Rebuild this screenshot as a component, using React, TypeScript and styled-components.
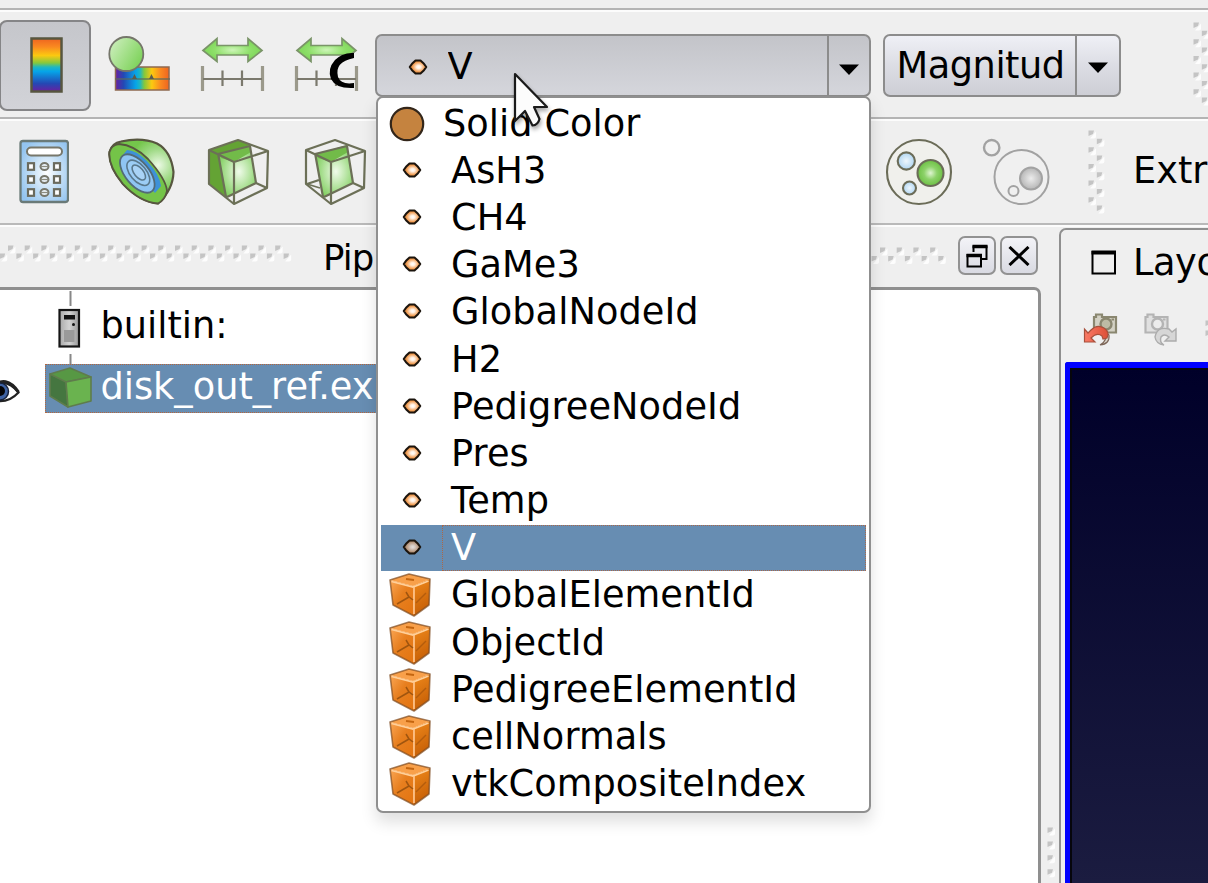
import React from "react";
import styled, { createGlobalStyle } from "styled-components";

const GlobalStyle = createGlobalStyle`
  html, body { margin: 0; padding: 0; overflow: hidden; }
  * { box-sizing: border-box; }
`;

const EDGE = "#8f8f8f";

const Window = styled.div`
  position: relative;
  width: 1208px;
  height: 883px;
  overflow: hidden;
  display: flex;
  flex-direction: column;
  background: #efefef;
  color: #000;
  font-family: "DejaVu Sans", sans-serif;
  font-size: 36.7px;
  white-space: nowrap;
`;

const Separator = styled.div<{ $soft?: boolean }>`
  flex: none;
  height: 4px;
  background: linear-gradient(${(p) => (p.$soft ? "#b9b9b9" : "#b4b4b4")} 0 2px, #fcfcfc 2px 4px);
`;

const TopStrip = styled.div`
  flex: none;
  height: 8px;
  background: #efefef;
`;

const Toolbar = styled.div<{ $height: number }>`
  flex: none;
  display: flex;
  align-items: flex-start;
  height: ${(p) => p.$height}px;
  overflow: hidden;
`;

const ToggleButton = styled.div`
  flex: none;
  display: flex;
  align-items: center;
  justify-content: center;
  width: 92px;
  height: 91px;
  margin: 8px 0 0 -1px;
  padding-left: 3px;
  padding-bottom: 1px;
  border: 2.5px solid #858587;
  border-radius: 8px;
  background: linear-gradient(#c5c6cb, #d2d3d8);
`;

const Icon = styled.svg<{ $left?: number; $top?: number }>`
  flex: none;
  display: block;
  margin-left: ${(p) => p.$left ?? 0}px;
  margin-top: ${(p) => p.$top ?? 0}px;
`;

const Combo = styled.div<{ $width: number; $left: number; $pressed?: boolean }>`
  flex: none;
  display: flex;
  width: ${(p) => p.$width}px;
  height: 63px;
  margin: 22px 0 0 ${(p) => p.$left}px;
  border: 2px solid #8c8c8c;
  border-radius: 7px;
  background: ${(p) =>
    p.$pressed ? "linear-gradient(#c3c4c9, #d5d6dc)" : "linear-gradient(#eff0f6, #dcdde4 50%, #cdced5)"};
`;

const ComboValue = styled.div<{ $left: number; $shift?: number }>`
  flex: 1;
  min-width: 0;
  display: flex;
  align-items: center;
  padding-left: ${(p) => p.$left}px;
  padding-top: ${(p) => p.$shift ?? 0}px;
  line-height: 56px;
  overflow: hidden;
`;

const ComboText = styled.span<{ $left?: number }>`
  flex: 1;
  min-width: 0;
  margin-left: ${(p) => p.$left ?? 0}px;
  margin-right: 12px;
  letter-spacing: -0.45px;
  overflow: hidden;
`;

const ComboArrow = styled.div<{ $width: number; $shift?: number }>`
  flex: none;
  display: flex;
  align-items: center;
  justify-content: center;
  width: ${(p) => p.$width}px;
  padding-top: ${(p) => p.$shift ?? 0}px;
  border-left: 2px solid #8c8c8c;
`;

const ToolbarLabel = styled.span`
  margin-left: 25px;
  margin-top: 18px;
  line-height: 64px;
`;

const Workspace = styled.div`
  flex: 1;
  min-height: 0;
  display: flex;
`;

const Dock = styled.div`
  flex: none;
  width: 1041px;
  display: flex;
  flex-direction: column;
`;

const DockHeader = styled.div`
  flex: none;
  height: 60px;
  display: flex;
  align-items: flex-start;
`;

const DockTitle = styled.span`
  width: 546px;
  margin-left: 30px;
  line-height: 58px;
  padding-top: 2px;
  font-size: 35.5px;
  letter-spacing: -0.9px;
`;

const DockButton = styled.div<{ $left: number }>`
  flex: none;
  display: flex;
  align-items: center;
  justify-content: center;
  width: 38px;
  height: 39px;
  margin: 9px 0 0 ${(p) => p.$left}px;
  border: 2px solid #929292;
  border-radius: 7px;
  background: linear-gradient(#f3f3f7, #d9dae2);
`;

const Tree = styled.div`
  flex: 1;
  display: flex;
  flex-direction: column;
  background: #fff;
  border-top: 3px solid ${EDGE};
  border-right: 3px solid ${EDGE};
  border-top-right-radius: 7px;
`;

const TreeRow = styled.div<{ $height: number }>`
  display: flex;
  height: ${(p) => p.$height}px;
`;

const TreeLabel = styled.span<{ $left: number; $line: number }>`
  margin-left: ${(p) => p.$left}px;
  line-height: ${(p) => p.$line}px;
`;

const Selection = styled.div`
  display: flex;
  width: 500px;
  height: 49px;
  margin-left: 25px;
  color: #fff;
  background: #678db2;
  border: 1px dotted #b5663c;
`;

const Splitter = styled.div`
  flex: none;
  display: flex;
  width: 18px;
`;

const ViewPane = styled.div`
  flex: 1;
  min-width: 0;
  display: flex;
  flex-direction: column;
  margin-top: 1px;
  border-top: 2.5px solid ${EDGE};
  border-left: 2.5px solid ${EDGE};
  border-top-left-radius: 7px;
  overflow: hidden;
`;

const TabBar = styled.div`
  flex: none;
  display: flex;
  height: 78px;
  line-height: 64px;
`;

const TabLabel = styled.span`
  margin-left: 16px;
  margin-top: 1px;
  letter-spacing: -0.4px;
`;

const ViewTools = styled.div`
  flex: none;
  display: flex;
  height: 54px;
`;

const RenderView = styled.div`
  flex: 1;
  margin-left: 4px;
  border-top: 6px solid #0000fe;
  border-left: 5px solid #0000fe;
  border-top-left-radius: 3px;
  background: linear-gradient(#000029, #1b1c40);
  box-shadow: inset 2px 2px 0 #06060c;
`;

const Popup = styled.div`
  position: absolute;
  left: 376px;
  top: 96px;
  width: 495px;
  height: 717px;
  padding: 2px 3px;
  border: 2.5px solid ${EDGE};
  border-radius: 7px;
  background: #fff;
  box-shadow: 0 9px 16px rgba(0, 0, 0, 0.13);
`;

const Option = styled.div<{ $selected?: boolean }>`
  display: flex;
  align-items: center;
  height: 47.2px;
  color: ${(p) => (p.$selected ? "#fff" : "#000")};
  background: ${(p) => (p.$selected ? "linear-gradient(#678db2 0 46.2px, transparent 46.2px)" : "none")};
`;

const OptionIcon = styled.span`
  flex: none;
  display: flex;
  justify-content: center;
  width: 61px;
`;

const OptionText = styled.span<{ $selected?: boolean; $near?: boolean }>`
  flex: 1;
  height: 46px;
  line-height: 44px;
  padding-left: ${(p) => (p.$near ? 0 : 8)}px;
  letter-spacing: 0.06px;
  border: 1px dotted ${(p) => (p.$selected ? "#a9684a" : "transparent")};
`;

const Pointer = styled.svg`
  position: absolute;
  left: 508px;
  top: 66px;
  filter: drop-shadow(1px 3px 2px rgba(0, 0, 0, 0.35));
`;

const INK = "#57563f";

function Grip({ dots, width, height, left, top }: { dots: number[][]; width: number; height: number; left?: number; top?: number }) {
  return (
    <Icon width={width} height={height} $left={left} $top={top}>
      {dots.map(([x, y], i) => (
        <g key={i}>
          <path d={`M${x + 8} ${y + 1.5}v5q0 2-2 2h-4z`} fill="#fdfdfd" />
          <path d={`M${x + 0.5} ${y + 0.5}h5.500l-1 3.500l-4.500 2z`} fill="#c4c4c4" />
        </g>
      ))}
    </Icon>
  );
}

const P = 16.7;
const range = (n: number) => Array.from({ length: n }, (_, i) => i);
const leftGrip = [
  ...range(17).map((i) => [7.5 + i * P, 1]),
  ...range(18).map((i) => [-0.8 + i * P, 9]),
];
const rightGrip = [
  ...range(4).map((i) => [8.5 + i * P, 0]),
  ...range(5).map((i) => [0 + i * P, 8.5]),
];
const verticalGrip = [
  ...range(5).map((i) => [0, i * P]),
  ...range(5).map((i) => [8.3, 8.3 + i * P]),
];

function Rainbow({ id, vertical }: { id: string; vertical?: boolean }) {
  return (
    <linearGradient id={id} x1="0" y1={vertical ? "1" : "0"} x2={vertical ? "0" : "1"} y2="0">
      <stop offset="0" stopColor="#6a1fa0" />
      <stop offset=".15" stopColor="#2448b4" />
      <stop offset=".38" stopColor="#06a5e8" />
      <stop offset=".46" stopColor="#1fb7c0" />
      <stop offset=".54" stopColor="#86c83c" />
      <stop offset=".68" stopColor="#fcc910" />
      <stop offset=".84" stopColor="#fa8a20" />
      <stop offset="1" stopColor="#ee6420" />
    </linearGradient>
  );
}

function ColorMapIcon() {
  return (
    <svg width="33" height="56">
      <defs><Rainbow id="mapV" vertical /></defs>
      <rect x="1.500" y="1.500" width="30" height="53" fill="url(#mapV)" stroke={INK} strokeWidth="2.500" />
    </svg>
  );
}

function EditMapIcon() {
  return (
    <Icon width="64" height="58" viewBox="108 35 64 58" $left={17} $top={23}>
      <defs>
        <Rainbow id="mapH" />
        <linearGradient id="ball" x1="0" y1="0" x2="1" y2="0.6">
          <stop offset="0" stopColor="#d4f1c6" />
          <stop offset="1" stopColor="#7fd35c" />
        </linearGradient>
      </defs>
      <rect x="115.500" y="67" width="53.500" height="23" fill="url(#mapH)" stroke="#8f6a50" strokeWidth="1.500" />
      <path d="M115 79h55" stroke="#5c6a5c" strokeOpacity=".85" strokeWidth="1.600" />
      <path d="M132 79l2.500-5l2.500 5zM149 79l2.500-5l2.500 5z" fill="#5c5c4c" />
      <circle cx="126.300" cy="54" r="17" fill="url(#ball)" stroke="#75766a" strokeWidth="1.800" />
    </Icon>
  );
}

function RescaleIcon({ left, id, custom }: { left: number; id: string; custom?: boolean }) {
  return (
    <Icon width="66" height="58" viewBox="200 35 66 58" $left={left} $top={23}>
      <defs>
        <radialGradient id={id}>
          <stop offset="0" stopColor="#cdf5b8" />
          <stop offset=".6" stopColor="#8fe06b" />
          <stop offset="1" stopColor="#7ed659" />
        </radialGradient>
      </defs>
      <path d="M204 50.500L218 38.500v7h31V38.500l14 12L249 61.500v-6.500h-31V61.500z" fill={`url(#${id})`} stroke="#7a9468" strokeWidth="1.700" />
      <path d="M203.500 66v25M263.500 66v25" stroke="#9b998b" strokeWidth="3.200" />
      <path d="M204 79h59M223.500 70.500V86M243 70.500V86" stroke="#7b796d" strokeWidth="2.200" />
      {custom && (
        <path d="M261 53q-11-1-19 7q-8 9-4 19q5 10 23 9v-5q-13 2-16-6q-4-15 16-19z" fill="#000" />
      )}
    </Icon>
  );
}

function CalculatorIcon() {
  return (
    <Icon width="50" height="65" viewBox="19 139 50 65" $left={19} $top={18}>
      <defs>
        <radialGradient id="calc" cx=".55" cy=".52" r=".62">
          <stop offset="0" stopColor="#fff" />
          <stop offset=".5" stopColor="#c4dff5" />
          <stop offset="1" stopColor="#93c4f0" />
        </radialGradient>
      </defs>
      <rect x="20.500" y="141" width="47.500" height="61" rx="2.500" fill="url(#calc)" stroke="#6a7a78" strokeWidth="2.300" />
      <rect x="27" y="147.500" width="35" height="8" rx="4" fill="#fff" stroke="#77776b" strokeWidth="2" />
      {[166.5, 179.5, 192.5].map((y) =>
        [31, 44.5, 57].map((x, i) =>
          i === 1 ? (
            <g key={x + "" + y}>
              <ellipse cx={x} cy={y} rx="4" ry="3.500" fill="#e9f1f5" stroke="#77776b" strokeWidth="2" />
              <path d={`M${x - 4} ${y}h8`} stroke="#8c8c80" strokeWidth="1.200" />
            </g>
          ) : (
            <rect key={x + "" + y} x={x - 3} y={y - 3.3} width="6" height="6.600" fill="#fff" stroke="#6a6a5d" strokeWidth="2.200" />
          )
        )
      )}
    </Icon>
  );
}

function ContourIcon() {
  return (
    <Icon width="67" height="67" viewBox="108 138 67 67" $left={39} $top={17}>
      <defs>
        <radialGradient id="shell" cx=".76" cy=".4" r=".45">
          <stop offset="0" stopColor="#edfae6" />
          <stop offset=".55" stopColor="#a0da87" />
          <stop offset="1" stopColor="#74c64b" />
        </radialGradient>
      </defs>
      <path d="M109.500 152Q112 143 121 141.500Q142 137 157 143.500Q171 151 173.500 172Q173 190 158 203.500Q140 202 123 184Q108 166 109.500 152z" fill="url(#shell)" stroke={INK} strokeWidth="2.200" />
      <path d="M109.500 152Q111 145 119 144Q134 145 148 159Q166 179 167 191Q165 200 158 203.500Q140 202 123 184Q108 166 109.500 152z" fill="#74c448" stroke={INK} strokeWidth="1.800" />
      <path d="M127 150Q136 150 147 161Q160 175 161 186L155 193L122 156z" fill="#3e91d8" />
      <ellipse cx="137.300" cy="173.500" rx="11.800" ry="23" transform="rotate(-40 137.300 173.500)" fill="#8fc5f3" stroke="#536b78" strokeWidth="1.800" />
      <ellipse cx="138.300" cy="172.800" rx="8" ry="15" transform="rotate(-40 138.300 172.800)" fill="#9ccdf5" stroke="#59788c" strokeWidth="1.600" />
      <ellipse cx="138.800" cy="172.500" rx="4.500" ry="9" transform="rotate(-40 138.800 172.500)" fill="#a9d3f6" stroke="#59788c" strokeWidth="1.600" />
    </Icon>
  );
}

function ClipIcon({ left, slice }: { left: number; slice?: boolean }) {
  const id = slice ? "sliceFace" : "clipFace";
  return (
    <Icon width="64" height="67" viewBox="207 138 64 67" $left={left} $top={17}>
      <defs>
        <radialGradient id={id} cx=".55" cy=".5" r=".6">
          <stop offset="0" stopColor="#f0fbea" />
          <stop offset="1" stopColor="#79cc56" />
        </radialGradient>
      </defs>
      {!slice && <path d="M209 150L238 140L251 145L220 158L226 197L209 184z" fill="#64a334" />}
      <path d="M218 154L250 146L256 183L226 197z" fill={`url(#${id})`} />
      <path d="M219 154L250 145L251 152L234 162L221 158z" fill="#72bb49" />
      <g fill="none" stroke="#6c7057" strokeWidth="2.200" strokeLinejoin="round">
        <path d="M209 150L238 140L268 151L267 188L234 204L209 184z" />
        <path d="M209 150L234 162L268 151M234 162V204M218 153L226 197M218 154L250 146L256 183L227 197" />
        <path d="M256 183L267 188" />
        {slice && <path d="M210 184L222 180" />}
        {slice && <path d="M210 184L223 188" strokeWidth="1.500" />}
      </g>
    </Icon>
  );
}

function GroupIcon() {
  return (
    <Icon width="68" height="68" viewBox="885 138 68 68" $left={517} $top={17}>
      <defs>
        <radialGradient id="greenBall"><stop offset="0" stopColor="#dff5d1" /><stop offset=".5" stopColor="#8dd26a" /><stop offset="1" stopColor="#6cc043" /></radialGradient>
        <radialGradient id="blueBall"><stop offset="0" stopColor="#eef7fd" /><stop offset="1" stopColor="#b0d6f2" /></radialGradient>
      </defs>
      <g stroke="#6b6c58" strokeWidth="2.100">
        <circle cx="919" cy="172" r="32" fill="#f0f0ec" />
        <circle cx="906.300" cy="161" r="8.600" fill="url(#blueBall)" />
        <circle cx="909.500" cy="188" r="6.500" fill="url(#blueBall)" />
        <circle cx="930.500" cy="173" r="13" fill="url(#greenBall)" />
      </g>
    </Icon>
  );
}

function ExtractGroupIcon() {
  return (
    <Icon width="70" height="68" viewBox="982 138 70 68" $left={29} $top={17}>
      <defs>
        <radialGradient id="grayBall"><stop offset="0" stopColor="#ececec" /><stop offset="1" stopColor="#b6b6b6" /></radialGradient>
      </defs>
      <g stroke="#a2a2a2" strokeWidth="2">
        <circle cx="1021.500" cy="177" r="27" fill="#f0f0f0" />
        <circle cx="991.700" cy="147.700" r="7.700" fill="#f0f0f0" strokeWidth="2.400" />
        <circle cx="1013.500" cy="191" r="5" fill="#f0f0f0" />
        <circle cx="1031" cy="178.500" r="11" fill="url(#grayBall)" />
      </g>
    </Icon>
  );
}

function CameraIcon({ left, redo }: { left: number; redo?: boolean }) {
  const ink = redo ? "#b4b4b4" : "#8a8770";
  return (
    <Icon width="35" height="34" viewBox="0 0 35 34" $left={left} $top={4}>
      <defs>
        <linearGradient id="undo" x1="0" x2="1"><stop offset="0" stopColor="#fa7a66" /><stop offset="1" stopColor="#dd5037" /></linearGradient>
      </defs>
      <g transform={redo ? "translate(-8.500 0)" : undefined}>
        <path d="M11 5H13V2.500H19V5H33V20.500H11z" fill={redo ? "#e0e0e0" : "#d3d1c4"} stroke={ink} strokeWidth="2.200" />
        <circle cx="23" cy="12" r="5.500" fill={redo ? "#ececec" : "#bdbba5"} stroke={ink} strokeWidth="2.400" />
        <path d="M28.500 7.500h2.500" stroke={ink} strokeWidth="2" />
      </g>
      {redo ? (
        <path d="M33 17v12H22l4-4q-5-4-8 0q-2 5 3 8q-8-1-9-8q2-11 14-8l3 3z" fill="#d6d6d6" stroke="#acacac" strokeWidth="1.400" />
      ) : (
        <>
          <path d="M17 33q10-1 9-10l-4-4q3 10-5 14z" fill="#d9d5cb" stroke="#7d6658" strokeWidth="1.200" />
          <path d="M1.500 17v13H12l-4-4q6-6 11-2l1 3l4-1q3-6-3-10q-7-4-13 2l-3 3z" fill="url(#undo)" stroke="#a8503c" strokeWidth="1.200" />
        </>
      )}
    </Icon>
  );
}

function ServerIcon() {
  return (
    <Icon width="24" height="76" viewBox="57 289 24 76" $left={57}>
      <defs>
        <linearGradient id="case" x1="0" x2="1"><stop offset="0" stopColor="#a9a9a9" /><stop offset=".5" stopColor="#d2d2d2" /><stop offset="1" stopColor="#989898" /></linearGradient>
      </defs>
      <path d="M70.500 290v15M70.500 353v12" stroke="#888" strokeWidth="2" />
      <rect x="59.500" y="309" width="19.500" height="36.500" fill="url(#case)" stroke="#151515" strokeWidth="2.200" />
      <rect x="64" y="314" width="11" height="4.500" fill="#111" />
      <circle cx="73.500" cy="323.500" r="1.500" fill="#111" />
      <rect x="64" y="329" width="10.500" height="12" fill="#9a9a9a" />
    </Icon>
  );
}

function EyeIcon() {
  return (
    <Icon width="20" height="24" viewBox="0 380 20 24" $top={16}>
      <path d="M-16 392Q4 374 18.500 392.500Q4 408-16 396z" fill="#fff" stroke="#222" strokeWidth="2.200" />
      <path d="M-8 387Q6 374 18.500 392" fill="none" stroke="#222" strokeWidth="3" />
      <circle cx="0" cy="391.500" r="8.500" fill="#3e62a3" stroke="#17223c" strokeWidth="1.500" />
      <circle cx="0" cy="391" r="5" fill="#050508" />
    </Icon>
  );
}

function GreenCube() {
  return (
    <Icon width="44" height="42" viewBox="48 367 44 42" $left={2} $top={2}>
      <g stroke="#5f7c4c" strokeWidth="1.600" strokeLinejoin="round">
        <path d="M50 374L66 381L68 407L50 396z" fill="#457640" />
        <path d="M50 374L70 368L91 377L66 382z" fill="#579844" />
        <path d="M66 382L91 377V401L68 407z" fill="#6ab34f" />
      </g>
    </Icon>
  );
}

function PointIcon({ dim }: { dim?: boolean }) {
  const id = dim ? "pointDim" : "point";
  return (
    <svg width="20" height="18" viewBox="0 0 20 18">
      <defs>
        <radialGradient id={id} cx=".54" cy=".5" r=".5">
          <stop offset="0" stopColor={dim ? "#e6e0dc" : "#fff"} />
          <stop offset=".25" stopColor={dim ? "#d8cdc6" : "#fff0e2"} />
          <stop offset=".7" stopColor={dim ? "#b99a82" : "#f2a25c"} />
          <stop offset="1" stopColor={dim ? "#8f6c4c" : "#d07a2c"} />
        </radialGradient>
      </defs>
      <path d="M1.700 9L4 5.800L7.500 2.500H12.500L16 5.800L18.300 9L16 12.200L12.500 15.500H7.500L4 12.200z" fill={`url(#${id})`} stroke="#1b140d" strokeWidth="2" strokeLinejoin="round" />
    </svg>
  );
}

function SolidIcon() {
  return (
    <svg width="36" height="36">
      <circle cx="18" cy="18" r="16.200" fill="#c5833f" stroke="#33261a" strokeWidth="2.200" />
    </svg>
  );
}

function CellIcon() {
  return (
    <svg width="42" height="44" viewBox="0 0 42 44">
      <defs>
        <linearGradient id="cellL" x1="0" y1="0" x2="1" y2="1"><stop offset="0" stopColor="#fba755" /><stop offset=".45" stopColor="#e77f1f" /><stop offset="1" stopColor="#e37410" /></linearGradient>
        <linearGradient id="cellR" x1="0" y1="0" x2=".3" y2="1"><stop offset="0" stopColor="#f08a1c" /><stop offset="1" stopColor="#c65f06" /></linearGradient>
      </defs>
      <path d="M1 7L24 13L25 43L4 32z" fill="url(#cellL)" />
      <path d="M24 13L41 6L40 32L25 43z" fill="url(#cellR)" />
      <path d="M1 7L20 1L41 6L24 13z" fill="#f8a04a" />
      <path d="M1 7L20 1L41 6L40 32L25 43L4 32z" fill="none" stroke="#7d4a20" strokeOpacity=".7" strokeWidth="1.600" strokeLinejoin="round" />
      <path d="M2.500 8.500L24 14L39.500 8" fill="none" stroke="#ffd09a" strokeWidth="1.700" />
      <path d="M25 14V41" stroke="#ffc48c" strokeWidth="1.700" />
      <path d="M8 31L20 24L24 27M20 24L17 19" fill="none" stroke="#a0550f" strokeWidth="1.500" />
      <path d="M27 30L37 20" stroke="#b45c0c" strokeWidth="1.500" />
      <path d="M17 6L25 7" stroke="#c4650f" strokeWidth="1.800" />
    </svg>
  );
}

const DownArrow = () => (
  <svg width="20" height="11"><path d="M0 .5h20L10 11z" fill="#000" /></svg>
);

type Kind = "solid" | "point" | "cell";
const OPTIONS: { label: string; kind: Kind; selected?: boolean }[] = [
  { label: "Solid Color", kind: "solid" },
  { label: "AsH3", kind: "point" },
  { label: "CH4", kind: "point" },
  { label: "GaMe3", kind: "point" },
  { label: "GlobalNodeId", kind: "point" },
  { label: "H2", kind: "point" },
  { label: "PedigreeNodeId", kind: "point" },
  { label: "Pres", kind: "point" },
  { label: "Temp", kind: "point" },
  { label: "V", kind: "point", selected: true },
  { label: "GlobalElementId", kind: "cell" },
  { label: "ObjectId", kind: "cell" },
  { label: "PedigreeElementId", kind: "cell" },
  { label: "cellNormals", kind: "cell" },
  { label: "vtkCompositeIndex", kind: "cell" },
];

const PointSlot = styled(OptionIcon)`
  padding-bottom: 2px;
`;
const SolidSlot = styled(OptionIcon)`
  padding-right: 10px;
`;
const CellSlot = styled(OptionIcon)`
  padding-right: 3px;
`;

function OptionGlyph({ kind, selected }: { kind: Kind; selected?: boolean }) {
  if (kind === "solid") return <SolidSlot><SolidIcon /></SolidSlot>;
  if (kind === "cell") return <CellSlot><CellIcon /></CellSlot>;
  return <PointSlot><PointIcon dim={selected} /></PointSlot>;
}

export default function App() {
  return (
    <Window>
      <GlobalStyle />
      <TopStrip />
      <Separator />
      <Toolbar $height={105}>
        <ToggleButton><ColorMapIcon /></ToggleButton>
        <EditMapIcon />
        <RescaleIcon left={27} id="arrowA" />
        <RescaleIcon left={28} id="arrowB" custom />
        <Combo $width={495.5} $left={16} $pressed>
          <ComboValue $left={30.5} $shift={2}>
            <PointIcon />
            <ComboText $left={20}>V</ComboText>
          </ComboValue>
          <ComboArrow $width={42} $shift={7}><DownArrow /></ComboArrow>
        </Combo>
        <Combo $width={238} $left={12}>
          <ComboValue $left={12}>
            <ComboText>Magnitude</ComboText>
          </ComboValue>
          <ComboArrow $width={44} $shift={3}><DownArrow /></ComboArrow>
        </Combo>
        <Grip dots={verticalGrip} width={18} height={84} left={72.5} top={10} />
      </Toolbar>
      <Separator />
      <Toolbar $height={102}>
        <CalculatorIcon />
        <ContourIcon />
        <ClipIcon left={32} />
        <ClipIcon left={33} slice />
        <GroupIcon />
        <ExtractGroupIcon />
        <Grip dots={verticalGrip} width={20} height={86} left={36} top={9} />
        <ToolbarLabel>Extract</ToolbarLabel>
      </Toolbar>
      <Separator $soft />
      <Workspace>
        <Dock>
          <DockHeader>
            <Grip dots={leftGrip} width={293} height={20} top={17} />
            <DockTitle>Pip</DockTitle>
            <Grip dots={rightGrip} width={78} height={20} left={2} top={20} />
            <DockButton $left={9}>
              <svg width="22" height="24" fill="none" stroke="#000" strokeWidth="2">
                <path d="M7.500 8V2.500H20.500V15H16" /><path d="M6.500 2.500H21.500" strokeWidth="3.500" />
                <rect x="1.500" y="11" width="13.500" height="11.500" /><path d="M.5 11.500H16" strokeWidth="3.500" />
              </svg>
            </DockButton>
            <DockButton $left={4}>
              <svg width="22" height="20"><path d="M1.500 1L20.500 19M20.500 1L1.500 19" stroke="#000" strokeWidth="3" /></svg>
            </DockButton>
          </DockHeader>
          <Tree>
            <TreeRow $height={74}>
              <ServerIcon />
              <TreeLabel $left={19.5} $line={72}>builtin:</TreeLabel>
            </TreeRow>
            <TreeRow $height={50}>
              <EyeIcon />
              <Selection>
                <GreenCube />
                <TreeLabel $left={8.5} $line={44}>disk_out_ref.ex</TreeLabel>
              </Selection>
            </TreeRow>
          </Tree>
        </Dock>
        <Splitter>
          <Grip dots={range(4).map((i) => [0, i * 13.9])} width={9} height={52} left={6} top={600} />
        </Splitter>
        <ViewPane>
          <TabBar>
            <Icon width="26" height="26" $left={30} $top={20}>
              <rect x="1.500" y="2" width="22.500" height="21.500" fill="none" stroke="#000" strokeWidth="2" />
              <path d="M.5 2.500H25" stroke="#000" strokeWidth="4" />
            </Icon>
            <TabLabel>Layout</TabLabel>
          </TabBar>
          <ViewTools>
            <CameraIcon left={22} />
            <CameraIcon left={25} redo />
            <Grip dots={[[0, 0], [0, 10]]} width={9} height={20} left={27} top={12} />
          </ViewTools>
          <RenderView />
        </ViewPane>
      </Workspace>
      <Popup>
        {OPTIONS.map((o) => (
          <Option key={o.label} $selected={o.selected}>
            <OptionGlyph kind={o.kind} selected={o.selected} />
            <OptionText $selected={o.selected} $near={o.kind === "solid"}>{o.label}</OptionText>
          </Option>
        ))}
      </Popup>
      <Pointer width="46" height="68" viewBox="508 66 46 68">
        <path d="M515 74L547 107H534L539.500 119Q538 125 532.500 125.500L525 111L515 121z" fill="#fcfcfc" stroke="#1a1a1a" strokeWidth="2.200" strokeLinejoin="round" />
      </Pointer>
    </Window>
  );
}
